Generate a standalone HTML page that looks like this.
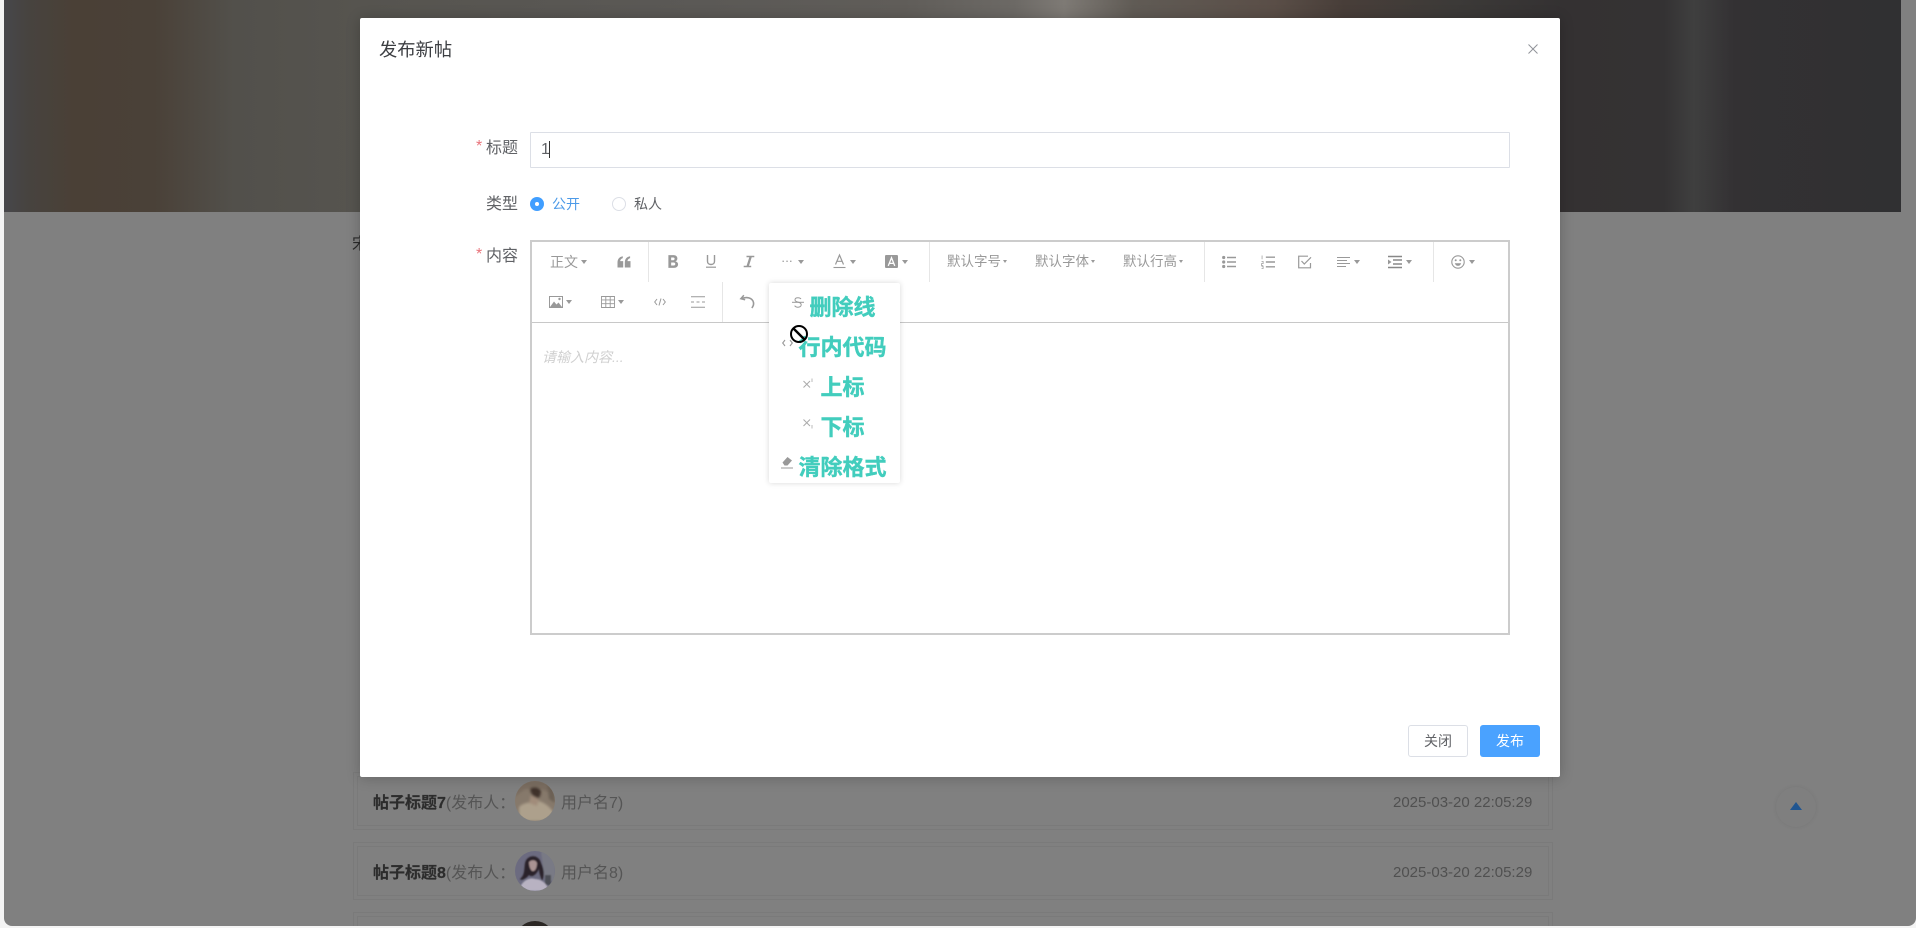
<!DOCTYPE html>
<html lang="zh-CN"><head><meta charset="utf-8"><title>发布新帖</title>
<style>
*{box-sizing:border-box}
html,body{margin:0;padding:0;width:1916px;height:928px;overflow:hidden;background:#f4f4f4;font-family:"Liberation Sans","Noto Sans CJK SC",sans-serif}
.a{position:absolute}
#page{position:absolute;left:4px;top:0;width:1912px;height:926px;background:#808080;overflow:hidden;border-radius:0 0 8px 8px}
#banner{position:absolute;left:0;top:0;width:1897px;height:212px;
background:linear-gradient(90deg,#47474b 0,#47433f 25px,#4a4036 70px,#4a4138 150px,#52504b 230px,#56544f 356px,#5b5956 700px,#605d59 900px,#6c6965 1010px,#7e7a75 1060px,#605b55 1130px,#5a4e47 1270px,#483e39 1340px,#3c3a38 1450px,#343132 1560px,#343233 1660px,#3f3f3f 1690px,#333133 1730px,#303032 1897px)}
.row{position:absolute;left:349px;width:1200px;height:58px;border:1px solid #7a7a7a}
.row i{position:absolute;left:3px;right:3px;top:3px;bottom:3px;border:1px solid #7a7a7a;display:block}
.t{position:absolute;font-size:16px;line-height:20px;white-space:nowrap}
.t b{-webkit-text-stroke:.2px #2c2c2c}
.av{position:absolute;width:40px;height:40px;border-radius:50%;overflow:hidden}
#modal{position:absolute;left:360px;top:18px;width:1200px;height:759px;background:#fff;border-radius:2px;box-shadow:0 1px 14px rgba(0,0,0,.22);color:#606266}
.lbl{position:absolute;font-size:16px;line-height:20px;color:#606266;white-space:nowrap}
.star{position:absolute;color:#e9737b;font-size:16px;line-height:16px}
.tb{position:absolute;font-size:13.5px;line-height:18px;color:#999;white-space:nowrap}
.c{position:absolute;width:0;height:0;border-left:3.5px solid transparent;border-right:3.5px solid transparent;border-top:4px solid #999}
.c.s{border-left-width:2px;border-right-width:2px;border-top-width:3px}
.sep{position:absolute;width:1px;background:#e6e6e6}
.ic{position:absolute;overflow:visible}
.m{position:absolute;font-size:22px;line-height:30px;font-weight:700;color:#42cdbd;-webkit-text-stroke:.4px #42cdbd;white-space:nowrap;left:769px;width:147px;text-align:center}
</style></head>
<body>
<div id="page">
  <div id="banner"></div>
  <div class="t" style="left:348px;top:235px;color:#2a2a2a">宋</div>

  <div class="row" style="top:772px"><i></i></div>
  <div class="row" style="top:842px"><i></i></div>
  <div class="row" style="top:912px"><i></i></div>

  <div class="t" style="left:369px;top:794px"><b style="color:#2c2c2c">帖子标题7</b><span style="color:#555">(发布人：</span></div>
  <svg class="av" style="left:511px;top:781px" width="40" height="40" viewBox="0 0 40 40"><defs><filter id="b1"><feGaussianBlur stdDeviation="1.2"/></filter></defs><rect width="40" height="40" fill="#86796b"/><g filter="url(#b1)"><path d="M0 0H40V14L26 8H10L0 16Z" fill="#7a6d60"/><path d="M4 40V26C10 20 18 22 24 20 30 22 36 26 40 34V40Z" fill="#ada08c"/><path d="M15 8C18 5 24 6 26 10 26 14 24 18 21 19 18 17 16 12 15 8Z" fill="#3f332c"/><path d="M16 14L24 18 22 25 14 22Z" fill="#a18c7a"/><path d="M32 0H40V22L34 18Z" fill="#6c6155"/></g></svg>
  <div class="t" style="left:557px;top:794px;color:#555">用户名7)</div>
  <div class="t" style="left:1389px;top:793px;font-size:15px;color:#505050">2025-03-20 22:05:29</div>

  <div class="t" style="left:369px;top:864px"><b style="color:#2c2c2c">帖子标题8</b><span style="color:#555">(发布人：</span></div>
  <svg class="av" style="left:511px;top:851px" width="40" height="40" viewBox="0 0 40 40"><defs><filter id="b2"><feGaussianBlur stdDeviation=".7"/></filter></defs><rect width="40" height="40" fill="#6c6b80"/><g filter="url(#b2)"><path d="M26 0H40V30H30Z" fill="#797a85"/><path d="M30 24H36V34H30Z" fill="#4b4d55"/><path d="M4 40C6 30 14 26 20 28 26 28 32 32 34 40Z" fill="#b8b2c2"/><path d="M10 12C12 3 24 3 26 12 29 18 30 24 27 30 25 24 24 22 24 18 20 26 16 26 14 24 11 28 6 30 5 28 10 24 9 18 10 12Z" fill="#29232c"/><path d="M14 11C17 8 21 9 22 12 22 17 20 21 17 20 15 18 14 15 14 11Z" fill="#a99393"/></g></svg>
  <div class="t" style="left:557px;top:864px;color:#555">用户名8)</div>
  <div class="t" style="left:1389px;top:863px;font-size:15px;color:#505050">2025-03-20 22:05:29</div>

  <div class="av" style="left:511px;top:921px;background:radial-gradient(circle at 50% 28%,#2b2724 0 38%,#6d665c 60%)"></div>

  <div class="a" style="left:1772px;top:787px;width:40px;height:40px;border-radius:50%;background:#7f7f7f;box-shadow:0 0 5px rgba(0,0,0,.07)"></div>
  <div class="a" style="left:1786px;top:802px;width:0;height:0;border-left:6.5px solid transparent;border-right:6.5px solid transparent;border-bottom:8px solid #205590"></div>
</div>

<div id="modal">
  <div class="a" style="left:19px;top:20px;font-size:18.3px;line-height:24px;color:#3c3e42">发布新帖</div>
  <svg class="ic" style="left:1167px;top:25px" width="12" height="12" viewBox="0 0 12 12"><path d="M1.5 1.5l9 9M10.5 1.5l-9 9" stroke="#909399" stroke-width="1" fill="none"/></svg>
</div>

<!-- form -->
<div class="star" style="left:476px;top:139px">*</div>
<div class="lbl" style="left:486px;top:139px">标题</div>
<div class="a" style="left:530px;top:132px;width:980px;height:36px;border:1px solid #dcdfe6;border-radius:1px;background:#fff"></div>
<div class="a" style="left:541px;top:139px;font-size:16px;line-height:22px;color:#606266">1</div>
<div class="a" style="left:549px;top:141px;width:1px;height:17px;background:#333"></div>

<div class="lbl" style="left:486px;top:195px">类型</div>
<div class="a" style="left:530px;top:197px;width:14px;height:14px;border-radius:50%;background:#409eff"></div>
<div class="a" style="left:535px;top:202px;width:4px;height:4px;border-radius:50%;background:#fff"></div>
<div class="a" style="left:552px;top:194px;font-size:14px;line-height:20px;color:#4c9ae8">公开</div>
<div class="a" style="left:612px;top:197px;width:14px;height:14px;border-radius:50%;border:1px solid #dcdfe6;background:#fff"></div>
<div class="a" style="left:634px;top:194px;font-size:14px;line-height:20px;color:#606266">私人</div>

<div class="star" style="left:476px;top:247px">*</div>
<div class="lbl" style="left:486px;top:247px">内容</div>

<!-- editor -->
<div class="a" style="left:530px;top:240px;width:980px;height:395px;border:2px solid #ccc;background:#fff"></div>
<div class="a" style="left:532px;top:322px;width:976px;height:1px;background:#c8c8c8"></div>

<div class="sep" style="left:648px;top:242px;height:40px"></div>
<div class="sep" style="left:929px;top:242px;height:40px"></div>
<div class="sep" style="left:1204px;top:242px;height:40px"></div>
<div class="sep" style="left:1433px;top:242px;height:40px"></div>
<div class="sep" style="left:722px;top:282px;height:40px"></div>

<div class="tb" style="left:550px;top:253px;font-size:14px">正文</div><div class="c" style="left:581px;top:260px"></div>
<svg class="ic" style="left:617px;top:255px" width="14" height="14" viewBox="0 0 14 13"><path d="M0.5 12V7.3C0.5 3.6 2.2 1.5 5.8 .8V2.6C4.1 3.2 3.2 4.2 3.2 5.6H6.2V12ZM7.8 12V7.3C7.8 3.6 9.5 1.5 13.1 .8V2.6C11.4 3.2 10.5 4.2 10.5 5.6H13.5V12Z" fill="#999"/></svg>
<svg class="ic" style="left:666px;top:254px" width="14" height="15" viewBox="0 0 12 13"><path d="M2 1V12H7C9 12 10.4 10.8 10.4 9 10.4 7.6 9.4 6.6 8 6.4 9 6.1 9.8 5.2 9.8 3.9 9.8 2.2 8.5 1 6.6 1ZM4.4 3H6.2C7 3 7.4 3.5 7.4 4.1S7 5.4 6.2 5.4H4.4ZM4.4 7.4H6.5C7.4 7.4 8 7.9 8 8.7 8 9.5 7.4 10 6.5 10H4.4Z" fill="#999"/></svg>
<svg class="ic" style="left:705px;top:254px" width="12" height="15" viewBox="0 0 12 15"><path d="M2.5 1V7.2C2.5 9.3 3.9 10.5 6 10.5S9.5 9.3 9.5 7.2V1" fill="none" stroke="#999" stroke-width="1.4"/><path d="M1 13.2H11" stroke="#999" stroke-width="1.2"/></svg>
<svg class="ic" style="left:743px;top:254px" width="12" height="15" viewBox="0 0 12 13"><path d="M3.5 .8H11.3V2.3H8.7L6 10.7H8.2V12.2H.7V10.7H3.6L6.3 2.3H3.5Z" fill="#999"/></svg>
<div class="a" style="left:781px;top:253px;font-size:13px;line-height:16px;color:#999;letter-spacing:-.5px">···</div><div class="c" style="left:798px;top:260px"></div>
<svg class="ic" style="left:833px;top:254px" width="13" height="15" viewBox="0 0 13 15"><path d="M2.5 10.5L6.5 1 10.5 10.5M4 7.3H9" fill="none" stroke="#999" stroke-width="1.2"/><path d="M.5 13.5H12.5" stroke="#999" stroke-width="1.1"/></svg><div class="c" style="left:850px;top:260px"></div>
<svg class="ic" style="left:885px;top:255px" width="13" height="13" viewBox="0 0 12 12"><rect width="12" height="12" rx="1" fill="#999"/><path d="M3 10L6 2.5 9 10M4 7.7H8" fill="none" stroke="#fff" stroke-width="1.2"/></svg><div class="c" style="left:902px;top:260px"></div>

<div class="tb" style="left:947px;top:253px">默认字号</div><div class="c s" style="left:1003px;top:260px"></div>
<div class="tb" style="left:1035px;top:253px">默认字体</div><div class="c s" style="left:1091px;top:260px"></div>
<div class="tb" style="left:1123px;top:253px">默认行高</div><div class="c s" style="left:1179px;top:260px"></div>

<svg class="ic" style="left:1222px;top:255px" width="14" height="14" viewBox="0 0 14 13"><circle cx="1.7" cy="2" r="1.6" fill="#999"/><circle cx="1.7" cy="6.5" r="1.6" fill="#999"/><circle cx="1.7" cy="11" r="1.6" fill="#999"/><path d="M5 2H14M5 6.5H14M5 11H14" stroke="#999" stroke-width="1.4"/></svg>
<svg class="ic" style="left:1261px;top:255px" width="14" height="14" viewBox="0 0 13 13"><path d="M1 .5V4M.5 6H2V8H.5V9.8H2M.5 10.5H2V12.5H.5" fill="none" stroke="#aaa" stroke-width=".8"/><path d="M4.5 2H13M4.5 6.5H13M4.5 11H13" stroke="#999" stroke-width="1.3"/></svg>
<svg class="ic" style="left:1298px;top:255px" width="14" height="14" viewBox="0 0 14 13"><path d="M12.5 7.5V12.3H.7V.7H10" fill="none" stroke="#999" stroke-width="1.2"/><path d="M3.5 5.5L6.3 8.5 13 1.8" fill="none" stroke="#999" stroke-width="1.2"/></svg>
<svg class="ic" style="left:1337px;top:256px" width="13" height="12" viewBox="0 0 13 11"><path d="M0 1H13M0 4H10M0 7H13M0 10H9" stroke="#999" stroke-width="1.1"/></svg><div class="c" style="left:1354px;top:260px"></div>
<svg class="ic" style="left:1388px;top:255px" width="14" height="14" viewBox="0 0 14 13"><path d="M0 1H14M5 4.5H14M5 8.5H14M0 12H14" stroke="#888" stroke-width="1.4"/><path d="M0 4L3.5 6.5 0 9Z" fill="#999"/></svg><div class="c" style="left:1406px;top:260px"></div>
<svg class="ic" style="left:1451px;top:255px" width="14" height="14" viewBox="0 0 14 14"><circle cx="7" cy="7" r="6.2" fill="none" stroke="#999" stroke-width="1.1"/><circle cx="4.7" cy="5.3" r="1" fill="#999"/><circle cx="9.3" cy="5.3" r="1" fill="#999"/><path d="M3.8 8.2C4.4 10 5.6 10.8 7 10.8S9.6 10 10.2 8.2Z" fill="#999"/></svg><div class="c" style="left:1469px;top:260px"></div>

<svg class="ic" style="left:549px;top:296px" width="14" height="12" viewBox="0 0 14 12"><rect x=".5" y=".5" width="13" height="11" fill="none" stroke="#999"/><path d="M1 11L5 5.5 7.5 8.5 9.5 6.5 13 11Z" fill="#999"/><circle cx="10.5" cy="3" r="1.2" fill="#999"/></svg><div class="c" style="left:566px;top:300px"></div>
<svg class="ic" style="left:601px;top:296px" width="14" height="12" viewBox="0 0 14 12"><path d="M.5 .5H13.5V11.5H.5ZM.5 3.9H13.5M.5 7.7H13.5M4.8 .5V11.5M9.2 .5V11.5" fill="none" stroke="#999" stroke-width=".9"/></svg><div class="c" style="left:618px;top:300px"></div>
<svg class="ic" style="left:654px;top:298px" width="12" height="8" viewBox="0 0 12 8"><path d="M3 1L.7 4 3 7M9 1L11.3 4 9 7M7 .5L5 7.5" fill="none" stroke="#999" stroke-width="1"/></svg>
<svg class="ic" style="left:691px;top:296px" width="14" height="12" viewBox="0 0 14 12"><path d="M0 .7H14M0 11.3H14" stroke="#999" stroke-width="1"/><path d="M0 6H3M5.5 6H8.5M11 6H14" stroke="#999" stroke-width="1"/></svg>
<svg class="ic" style="left:740px;top:294px" width="15" height="15" viewBox="0 0 14 14"><path d="M3.6 1.2L.8 4.4 4.8 5.4" fill="none" stroke="#999" stroke-width="1.4"/><path d="M1.3 4.4C5.8 2.2 11.6 3.4 12.6 8 12.9 9.7 12.3 11.6 11 13" fill="none" stroke="#999" stroke-width="1.5"/></svg>

<div class="a" style="left:542px;top:347px;font-size:14px;line-height:20px;font-style:italic;color:#d0d0d0">请输入内容...</div>

<!-- dropdown -->
<div class="a" style="left:769px;top:283px;width:131px;height:200px;background:#fff;border-radius:2px;box-shadow:0 0 6px rgba(0,0,0,.16)"></div>
<div class="m" style="top:293px">删除线</div>
<div class="m" style="top:333px">行内代码</div>
<div class="m" style="top:373px">上标</div>
<div class="m" style="top:413px">下标</div>
<div class="m" style="top:453px">清除格式</div>
<svg class="ic" style="left:792px;top:297px" width="12" height="11" viewBox="0 0 12 11"><path d="M9 2C8.3 1 7.3.7 6 .7 4.3.7 3 1.4 3 2.8 3 4 4 4.7 6 5.1 8 5.6 9.2 6.2 9.2 7.8 9.2 9.3 7.8 10.2 6 10.2 4.5 10.2 3.3 9.7 2.7 8.6" fill="none" stroke="#999" stroke-width="1"/><path d="M0 5.3H12" stroke="#999" stroke-width="1"/></svg>
<svg class="ic" style="left:782px;top:339px" width="11" height="8" viewBox="0 0 11 8"><path d="M3 1L.7 4 3 7M8 1L10.3 4 8 7" fill="none" stroke="#999" stroke-width="1.1"/></svg>
<svg class="ic" style="left:803px;top:378px" width="11" height="10" viewBox="0 0 11 10"><path d="M.5 3L7 9.5M7 3L.5 9.5" stroke="#aaa" stroke-width="1"/><path d="M9 .5V4" stroke="#aaa" stroke-width=".8"/></svg>
<svg class="ic" style="left:803px;top:419px" width="11" height="10" viewBox="0 0 11 10"><path d="M.5 .5L7 7M7 .5L.5 7" stroke="#aaa" stroke-width="1"/><path d="M9 6V9.5" stroke="#aaa" stroke-width=".8"/></svg>
<svg class="ic" style="left:781px;top:456px" width="12" height="13" viewBox="0 0 12 13"><path d="M1.5 6.5L6.5 1 11 4.5 6.5 9.5H3.5Z" fill="#999"/><path d="M0 12H12" stroke="#999" stroke-width="1"/></svg>

<!-- cursor -->
<svg class="ic" style="left:789px;top:324px" width="20" height="20" viewBox="0 0 20 20"><circle cx="10" cy="10" r="8" fill="none" stroke="#000" stroke-width="2"/><path d="M4.5 4.5L15.5 15.5" stroke="#000" stroke-width="2.4"/></svg>

<!-- buttons -->
<div class="a" style="left:1408px;top:725px;width:60px;height:32px;border:1px solid #dcdfe6;border-radius:3px;background:#fff;color:#606266;font-size:14px;line-height:30px;text-align:center">关闭</div>
<div class="a" style="left:1480px;top:725px;width:60px;height:32px;border-radius:3px;background:#4aa2ff;color:#fff;font-size:14px;line-height:32px;text-align:center">发布</div>
</body></html>
